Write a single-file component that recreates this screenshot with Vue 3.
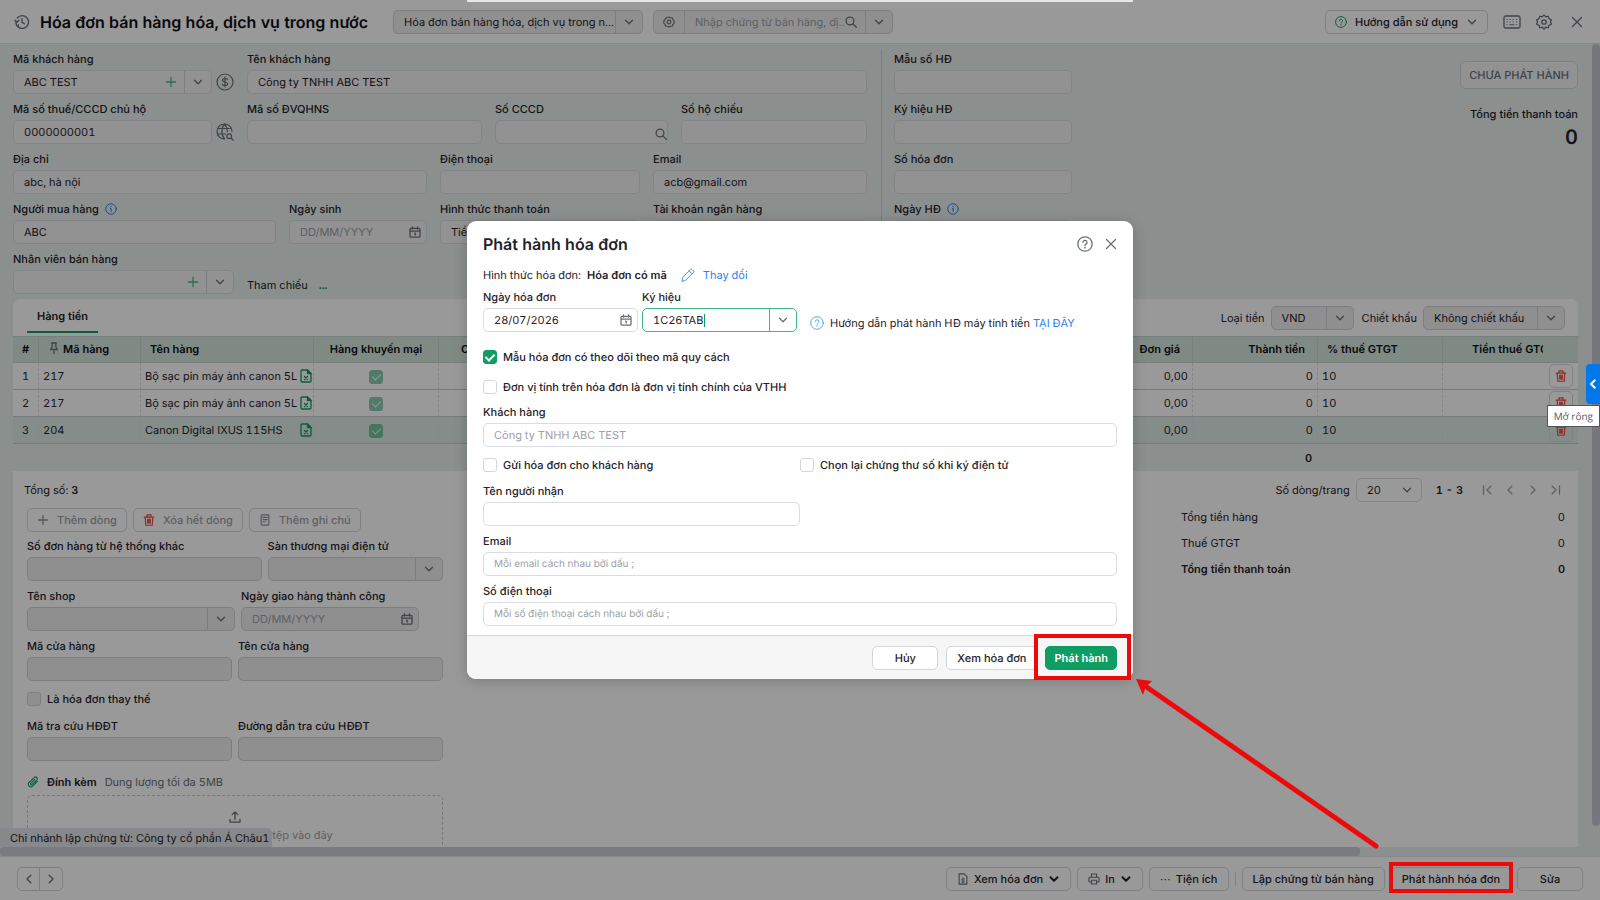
<script setup>
import { ref } from 'vue'

const rows = ref([
  { id: 1, code: '217', name: 'Bộ sạc pin máy ảnh canon 5L', price: '0,00', amount: 0, vat: 10 },
  { id: 2, code: '217', name: 'Bộ sạc pin máy ảnh canon 5L', price: '0,00', amount: 0, vat: 10 },
  { id: 3, code: '204', name: 'Canon Digital IXUS 115HS', price: '0,00', amount: 0, vat: 10 },
])

const selected = ref(3)

const customer = ref({
  code: 'ABC TEST',
  name: 'Công ty TNHH ABC TEST',
  tax: '0000000001',
  address: 'abc, hà nội',
  email: 'acb@gmail.com',
  buyer: 'ABC',
})

const issue = ref({
  date: '28/07/2026',
  symbol: '1C26TAB',
  spec: true,
  unit: false,
  send: false,
  cert: false,
  receiver: '',
  email: '',
  phone: '',
})
</script>

<template>
  <div class="page">
    <!-- icon sprite -->
    <svg class="sprite" aria-hidden="true">
      <symbol id="i-down" viewBox="0 0 12 12"><path d="M2.5 4.2 6 7.7l3.5-3.5" /></symbol>
      <symbol id="i-left" viewBox="0 0 12 12"><path d="M7.8 2.2 4 6l3.8 3.8" /></symbol>
      <symbol id="i-right" viewBox="0 0 12 12"><path d="M4.2 2.2 8 6l-3.8 3.8" /></symbol>
      <symbol id="i-first" viewBox="0 0 12 12"><path d="M9.8 2.2 6 6l3.8 3.8M2.5 1.8v8.4" /></symbol>
      <symbol id="i-last" viewBox="0 0 12 12"><path d="M2.2 2.2 6 6 2.2 9.8M9.5 1.8v8.4" /></symbol>
      <symbol id="i-plus" viewBox="0 0 12 12"><path d="M6 1.5v9M1.5 6h9" /></symbol>
      <symbol id="i-close" viewBox="0 0 12 12"><path d="M1.5 1.5l9 9M10.5 1.5l-9 9" /></symbol>
      <symbol id="i-history" viewBox="0 0 16 16">
        <path d="M1.8 8.4A6.4 6.4 0 1 0 3.2 4M8 4.3v3.9l2.4 1.6M1 6.2l1.9 2 2-1.9M3.4 12.6 4.6 11" />
      </symbol>
      <symbol id="i-gear" viewBox="0 0 16 16">
        <circle cx="8" cy="8" r="2.2" />
        <path d="M8 .9l1.7 1.9 2.5-.6.8 2.4 2.3 1.2-.7 2.2.7 2.2-2.3 1.2-.8 2.4-2.5-.6L8 15.1l-1.7-1.9-2.5.6-.8-2.4L.7 10.2l.7-2.2L.7 5.8 3 4.6l.8-2.4 2.5.6z" />
      </symbol>
      <symbol id="i-cog" viewBox="0 0 14 14">
        <circle cx="7" cy="7" r="2.2" />
        <path d="M7 1l1.5 1h2.200l.8 2L13 5.500V8.500L11.500 10l-.8 2H8.500L7 13l-1.500-1H3.300l-.8-2L1 8.500v-3L2.500 4l.8-2h2.200z" />
      </symbol>
      <symbol id="i-search" viewBox="0 0 12 12"><circle cx="5" cy="5" r="3.9" /><path d="M7.9 7.9l3.4 3.4" /></symbol>
      <symbol id="i-help" viewBox="0 0 16 16">
        <circle cx="8" cy="8" r="7.2" />
        <path d="M6 6.3A2 2 0 1 1 8.8 8.2C8.2 8.5 8 8.8 8 9.5M8 11.2v.8" />
      </symbol>
      <symbol id="i-info" viewBox="0 0 16 16"><circle cx="8" cy="8" r="7" /><path d="M7 7.3h1.2v4M8 4.3v1" /></symbol>
      <symbol id="i-keyboard" viewBox="0 0 18 14">
        <rect x="1" y="1" width="16" height="12" rx="1.5" />
        <g stroke-width="1"><path d="M4 4.500h.2M7 4.500h.2M10 4.500h.2M13.500 4.500h.2M4 7h.2M7 7h.2M10 7h.2M13.500 7h.2M4 9.700h.2M7 9.700h4M13.500 9.700h.2" /></g>
      </symbol>
      <symbol id="i-dollar" viewBox="0 0 18 18">
        <circle cx="9" cy="9" r="8" />
        <path d="M11.500 6.600C11 5.700 10.200 5.500 9 5.500c-1.500 0-2.500.6-2.500 1.700C6.500 9.700 11.600 8.300 11.600 10.800c0 1.100-1 1.800-2.600 1.800-1.300 0-2.300-.4-2.700-1.400M9 4v10" />
      </symbol>
      <symbol id="i-globe" viewBox="0 0 18 18">
        <path d="M16 8.500A7.500 7.500 0 1 0 8.500 16M8.500 1C5 5 5 12 8.500 16M8.500 1c2 2.300 2.900 4.800 2.900 7.500M2 5.500h13M1.500 11h8" />
        <circle cx="13.200" cy="13.200" r="2.400" /><path d="M15 15l2.300 2.300" />
      </symbol>
      <symbol id="i-calendar" viewBox="0 0 12 12">
        <path d="M2 2.300h8q1 0 1 1v6.900q0 1-1 1H2q-1 0-1-1V3.300q0-1 1-1zM1 5.200h10M3.500.8v2.400M8.500.8v2.400M5.700 7.200h.5v1.900" />
      </symbol>
      <symbol id="i-pin" viewBox="0 0 10 12"><path d="M2.500 1h5M3.200 1v4L1.500 7.500h7L6.800 5V1M5 7.500v4" /></symbol>
      <symbol id="i-sheet" viewBox="0 0 12 14">
        <path d="M1 2.200Q1 1 2.200 1H7.500L11 4.500V11.800Q11 13 9.800 13H2.200Q1 13 1 11.800zM4.500 7.500l3 3M7.500 7.500l-3 3" />
        <path d="M7.500 1v3.500H11z" fill="currentColor" />
      </symbol>
      <symbol id="i-trash" viewBox="0 0 12 13">
        <path d="M.8 3.300h10.400M3.800 3.300V1h4.400v2.300M1.900 3.300l.6 8.900h7l.6-8.900M4.600 5.600v4.300M6 5.600v4.300M7.400 5.600v4.300" />
      </symbol>
      <symbol id="i-note" viewBox="0 0 12 14">
        <rect x="1.500" y="1" width="9" height="12" rx="1" /><path d="M3.500 4h5M3.500 6.500h5M3.500 9h3" />
      </symbol>
      <symbol id="i-clip" viewBox="0 0 14 14">
        <path d="M12 6.300 6.700 11.700a2.900 2.900 0 0 1-4.200-4.200l5.800-5.700a2 2 0 0 1 3 2.900L5.800 10a1 1 0 0 1-1.500-1.400L9 4" />
      </symbol>
      <symbol id="i-upload" viewBox="0 0 12 12"><path d="M6 8.500V1M3.200 3.600 6 .9l2.800 2.700M1 8.500v2.600h10V8.500" /></symbol>
      <symbol id="i-doc" viewBox="0 0 12 14">
        <path d="M1.500 1h6l3 3v9h-9z" />
        <g stroke-width="1"><path d="M7.600 7C7 6.400 4.500 6.300 4.500 7.600S7.600 8.600 7.600 9.900 5 11.200 4.400 10.400M6 5.500v6.300" /></g>
      </symbol>
      <symbol id="i-print" viewBox="0 0 14 14">
        <path d="M4 5V1.200h6V5M4 10.500H2.500Q1 10.500 1 9V6.500Q1 5 2.500 5h9Q13 5 13 6.500V9q0 1.500-1.500 1.500H10M4 8.500h6v4.300H4z" />
      </symbol>
      <symbol id="i-pen" viewBox="0 0 14 14"><path d="M1 13l.9-3.800L9.500 1.500q.8-.8 1.600 0l1.300 1.300q.8.8 0 1.600L4.800 12.100zM8.200 2.900l2.900 2.900" /></symbol>
    </svg>

    <header class="topbar">
      <svg class="ic s16"><use href="#i-history" /></svg>
      <h1>Hóa đơn bán hàng hóa, dịch vụ trong nước</h1>
      <div class="box grey type">
        <select aria-label="Loại hóa đơn"><option>Hóa đơn bán hàng hóa, dịch vụ trong n...</option></select>
        <span class="arrow"><svg class="ic s12"><use href="#i-down" /></svg></span>
      </div>
      <div class="box grey find">
        <button class="arrow first" aria-label="Tùy chọn"><svg class="ic s12"><use href="#i-cog" /></svg></button>
        <input type="text" aria-label="Tìm chứng từ" placeholder="Nhập chứng từ bán hàng, dị...">
        <svg class="ic s12 in"><use href="#i-search" /></svg>
        <button class="arrow" aria-label="Mở"><svg class="ic s12"><use href="#i-down" /></svg></button>
      </div>
      <span class="grow"></span>
      <button class="btn guide">
        <svg class="ic s12 green"><use href="#i-help" /></svg>Hướng dẫn sử dụng<svg class="ic s12"><use href="#i-down" /></svg>
      </button>
      <button class="plain" aria-label="Bàn phím"><svg class="ic s18"><use href="#i-keyboard" /></svg></button>
      <button class="plain" aria-label="Thiết lập"><svg class="ic s16"><use href="#i-gear" /></svg></button>
      <button class="plain" aria-label="Đóng"><svg class="ic s12"><use href="#i-close" /></svg></button>
    </header>

    <main class="main">
      <section class="info">
        <div class="buyer">
          <div class="line l1">
            <div class="with-icon">
              <div class="field">
                <label for="code">Mã khách hàng</label>
                <div class="box">
                  <input id="code" v-model="customer.code" type="text">
                  <button class="plain in" aria-label="Thêm khách hàng"><svg class="ic s12 mint"><use href="#i-plus" /></svg></button>
                  <button class="arrow" aria-label="Mở"><svg class="ic s12"><use href="#i-down" /></svg></button>
                </div>
              </div>
              <svg class="ic s18"><use href="#i-dollar" /></svg>
            </div>
            <div class="field">
              <label for="name">Tên khách hàng</label>
              <div class="box"><input id="name" v-model="customer.name" type="text"></div>
            </div>
          </div>
          <div class="line l2">
            <div class="with-icon">
              <div class="field">
                <label for="tax">Mã số thuế/CCCD chủ hộ</label>
                <div class="box"><input id="tax" v-model="customer.tax" type="text"></div>
              </div>
              <svg class="ic s18"><use href="#i-globe" /></svg>
            </div>
            <div class="field">
              <label for="dvqhns">Mã số ĐVQHNS</label>
              <div class="box"><input id="dvqhns" type="text"></div>
            </div>
            <div class="field">
              <label for="cccd">Số CCCD</label>
              <div class="box"><input id="cccd" type="text"><svg class="ic s12 edge"><use href="#i-search" /></svg></div>
            </div>
            <div class="field">
              <label for="passport">Số hộ chiếu</label>
              <div class="box"><input id="passport" type="text"></div>
            </div>
          </div>
          <div class="line l3">
            <div class="field">
              <label for="address">Địa chỉ</label>
              <div class="box"><input id="address" v-model="customer.address" type="text"></div>
            </div>
            <div class="field">
              <label for="tel">Điện thoại</label>
              <div class="box"><input id="tel" type="text"></div>
            </div>
            <div class="field">
              <label for="mail">Email</label>
              <div class="box"><input id="mail" v-model="customer.email" type="text"></div>
            </div>
          </div>
          <div class="line l4">
            <div class="field">
              <label for="buyer">Người mua hàng <svg class="ic s12 blue"><use href="#i-info" /></svg></label>
              <div class="box"><input id="buyer" v-model="customer.buyer" type="text"></div>
            </div>
            <div class="field">
              <label for="birth">Ngày sinh</label>
              <div class="box"><input id="birth" type="text" placeholder="DD/MM/YYYY"><svg class="ic s12 in"><use href="#i-calendar" /></svg></div>
            </div>
            <div class="field">
              <label for="pay">Hình thức thanh toán</label>
              <div class="box">
                <select id="pay"><option>Tiền mặt</option></select>
                <span class="arrow"><svg class="ic s12"><use href="#i-down" /></svg></span>
              </div>
            </div>
            <div class="field">
              <label for="bank">Tài khoản ngân hàng</label>
              <div class="box">
                <select id="bank"><option></option></select>
                <span class="arrow"><svg class="ic s12"><use href="#i-down" /></svg></span>
              </div>
            </div>
          </div>
          <div class="line l5">
            <div class="field">
              <label for="staff">Nhân viên bán hàng</label>
              <div class="box">
                <input id="staff" type="text">
                <button class="plain in" aria-label="Thêm nhân viên"><svg class="ic s12 mint"><use href="#i-plus" /></svg></button>
                <button class="arrow" aria-label="Mở"><svg class="ic s12"><use href="#i-down" /></svg></button>
              </div>
            </div>
            <p class="ref">Tham chiếu <a href="#">...</a></p>
          </div>
        </div>

        <div class="seller">
          <div class="field">
            <label for="form-no">Mẫu số HĐ</label>
            <div class="box"><input id="form-no" type="text"></div>
          </div>
          <div class="field">
            <label for="serial">Ký hiệu HĐ</label>
            <div class="box"><input id="serial" type="text"></div>
          </div>
          <div class="field">
            <label for="inv-no">Số hóa đơn</label>
            <div class="box"><input id="inv-no" type="text"></div>
          </div>
          <div class="field">
            <label for="inv-date">Ngày HĐ <svg class="ic s12 blue"><use href="#i-info" /></svg></label>
            <div class="box"><input id="inv-date" type="text"></div>
          </div>
        </div>

        <div class="status">
          <button class="btn state">CHƯA PHÁT HÀNH</button>
          <p>Tổng tiền thanh toán</p>
          <strong>0</strong>
        </div>
      </section>

      <section class="card">
        <div class="tools">
          <a class="tab" href="#">Hàng tiền</a>
          <span class="grow"></span>
          <label for="currency">Loại tiền</label>
          <div class="box grey currency">
            <select id="currency"><option>VND</option></select>
            <span class="arrow"><svg class="ic s12"><use href="#i-down" /></svg></span>
          </div>
          <label for="discount">Chiết khấu</label>
          <div class="box grey discount">
            <select id="discount"><option>Không chiết khấu</option></select>
            <span class="arrow"><svg class="ic s12"><use href="#i-down" /></svg></span>
          </div>
        </div>

        <table>
          <colgroup>
            <col class="c-no"><col class="c-code"><col class="c-name"><col class="c-mid"><col>
            <col class="c-mid"><col class="c-mid"><col class="c-mid"><col class="c-tax"><col class="c-act">
          </colgroup>
          <thead>
            <tr>
              <th class="center">#</th>
              <th><svg class="ic s12 pin"><use href="#i-pin" /></svg>Mã hàng</th>
              <th>Tên hàng</th>
              <th class="center">Hàng khuyến mại</th>
              <th class="next">CK</th>
              <th class="num">Đơn giá</th>
              <th class="num">Thành tiền</th>
              <th>% thuế GTGT</th>
              <th class="tax">Tiền thuế GTGT</th>
              <th></th>
            </tr>
          </thead>
          <tbody>
            <tr v-for="row in rows" :key="row.id" :class="{ active: row.id === selected }" @click="selected = row.id">
              <td class="center">{{ row.id }}</td>
              <td>{{ row.code }}</td>
              <td class="name">
                <div class="item"><span>{{ row.name }}</span><svg class="ic sheet green"><use href="#i-sheet" /></svg></div>
              </td>
              <td class="center"><input type="checkbox" class="check" checked disabled aria-label="Hàng khuyến mại"></td>
              <td></td>
              <td class="num">{{ row.price }}</td>
              <td class="num">{{ row.amount }}</td>
              <td>{{ row.vat }}</td>
              <td class="last"></td>
              <td class="act"><button class="del" aria-label="Xóa dòng"><svg class="ic s12 red"><use href="#i-trash" /></svg></button></td>
            </tr>
          </tbody>
          <tfoot>
            <tr>
              <td colspan="6"></td>
              <td class="num">0</td>
              <td colspan="3"></td>
            </tr>
          </tfoot>
        </table>

        <div class="detail">
          <div class="pager">
            <span>Tổng số: <b>3</b></span>
            <span class="grow"></span>
            <label for="size">Số dòng/trang</label>
            <div class="box size">
              <select id="size"><option>20</option></select>
              <svg class="ic s12 in"><use href="#i-down" /></svg>
            </div>
            <b>1 - 3</b>
            <div class="steps">
              <button class="plain" aria-label="Trang đầu"><svg class="ic s12"><use href="#i-first" /></svg></button>
              <button class="plain" aria-label="Trang trước"><svg class="ic s12"><use href="#i-left" /></svg></button>
              <button class="plain" aria-label="Trang sau"><svg class="ic s12"><use href="#i-right" /></svg></button>
              <button class="plain" aria-label="Trang cuối"><svg class="ic s12"><use href="#i-last" /></svg></button>
            </div>
          </div>

          <div class="split">
            <div class="extra">
              <div class="actions">
                <button class="btn mute"><svg class="ic s12"><use href="#i-plus" /></svg>Thêm dòng</button>
                <button class="btn mute"><svg class="ic s12 red"><use href="#i-trash" /></svg>Xóa hết dòng</button>
                <button class="btn mute"><svg class="ic s12"><use href="#i-note" /></svg>Thêm ghi chú</button>
              </div>
              <div class="pair p1">
                <div class="field">
                  <label for="order">Số đơn hàng từ hệ thống khác</label>
                  <div class="box grey"><input id="order" type="text"></div>
                </div>
                <div class="field">
                  <label for="market">Sàn thương mại điện tử</label>
                  <div class="box grey">
                    <select id="market"><option></option></select>
                    <span class="arrow"><svg class="ic s12"><use href="#i-down" /></svg></span>
                  </div>
                </div>
              </div>
              <div class="pair p2">
                <div class="field">
                  <label for="shop">Tên shop</label>
                  <div class="box grey">
                    <select id="shop"><option></option></select>
                    <span class="arrow"><svg class="ic s12"><use href="#i-down" /></svg></span>
                  </div>
                </div>
                <div class="field">
                  <label for="ship">Ngày giao hàng thành công</label>
                  <div class="box grey"><input id="ship" type="text" placeholder="DD/MM/YYYY"><svg class="ic s12 in"><use href="#i-calendar" /></svg></div>
                </div>
              </div>
              <div class="pair">
                <div class="field">
                  <label for="store-code">Mã cửa hàng</label>
                  <div class="box grey"><input id="store-code" type="text"></div>
                </div>
                <div class="field">
                  <label for="store">Tên cửa hàng</label>
                  <div class="box grey"><input id="store" type="text"></div>
                </div>
              </div>
              <label class="tick replace"><input type="checkbox" class="check grey">Là hóa đơn thay thế</label>
              <div class="pair lookup">
                <div class="field">
                  <label for="lookup">Mã tra cứu HĐĐT</label>
                  <div class="box grey"><input id="lookup" type="text"></div>
                </div>
                <div class="field">
                  <label for="url">Đường dẫn tra cứu HĐĐT</label>
                  <div class="box grey"><input id="url" type="text"></div>
                </div>
              </div>
              <p class="attach"><svg class="ic s12 green"><use href="#i-clip" /></svg><b>Đính kèm</b><span>Dung lượng tối đa 5MB</span></p>
              <div class="drop">
                <svg class="ic s12"><use href="#i-upload" /></svg>
                <span>Chọn tệp hoặc kéo và thả tệp vào đây</span>
              </div>
            </div>

            <dl class="totals">
              <div><dt>Tổng tiền hàng</dt><dd>0</dd></div>
              <div><dt>Thuế GTGT</dt><dd>0</dd></div>
              <div class="sum"><dt>Tổng tiền thanh toán</dt><dd>0</dd></div>
            </dl>
          </div>
        </div>
      </section>
      <div class="branch">Chi nhánh lập chứng từ: Công ty cổ phần Á Châu1</div>
      <div class="vbar"></div>
    </main>

    <div class="hbar"><div></div></div>

    <footer class="bottom">
      <div class="box nav">
        <button class="arrow first" aria-label="Trước"><svg class="ic s12"><use href="#i-left" /></svg></button>
        <button class="arrow bare" aria-label="Sau"><svg class="ic s12"><use href="#i-right" /></svg></button>
      </div>
      <span class="grow"></span>
      <button class="btn"><svg class="ic s12"><use href="#i-doc" /></svg>Xem hóa đơn<svg class="ic s12 dark"><use href="#i-down" /></svg></button>
      <button class="btn"><svg class="ic s12"><use href="#i-print" /></svg>In<svg class="ic s12 dark"><use href="#i-down" /></svg></button>
      <button class="btn"><span>⋯</span>Tiện ích</button>
      <i class="bar"></i>
      <button class="btn">Lập chứng từ bán hàng</button>
      <button class="btn">Phát hành hóa đơn</button>
      <button class="btn edit">Sửa</button>
    </footer>

    <div class="overlay">
      <form class="modal" @submit.prevent>
        <div class="content">
          <div class="head">
            <h2>Phát hành hóa đơn</h2>
            <button type="button" class="plain" aria-label="Trợ giúp"><svg class="ic s16"><use href="#i-help" /></svg></button>
            <button type="button" class="plain" aria-label="Đóng"><svg class="ic s12"><use href="#i-close" /></svg></button>
          </div>
          <p class="kind">
            Hình thức hóa đơn: <b>Hóa đơn có mã</b>
            <a href="#"><svg class="ic s14 sky"><use href="#i-pen" /></svg>Thay đổi</a>
          </p>
          <div class="when">
            <div class="field">
              <label for="i-date">Ngày hóa đơn</label>
              <div class="box"><input id="i-date" v-model="issue.date" type="text"><svg class="ic s12 in"><use href="#i-calendar" /></svg></div>
            </div>
            <div class="field">
              <label for="i-symbol">Ký hiệu</label>
              <div class="box focus">
                <input id="i-symbol" v-model="issue.symbol" type="text"><i class="caret"></i>
                <button type="button" class="arrow" aria-label="Mở"><svg class="ic s12"><use href="#i-down" /></svg></button>
              </div>
            </div>
            <p class="hint"><svg class="ic s14 sky"><use href="#i-help" /></svg><span>Hướng dẫn phát hành HĐ máy tính tiền <a href="#">TẠI ĐÂY</a></span></p>
          </div>
          <label class="tick t1"><input v-model="issue.spec" type="checkbox" class="check">Mẫu hóa đơn có theo dõi theo mã quy cách</label>
          <label class="tick t2"><input v-model="issue.unit" type="checkbox" class="check">Đơn vị tính trên hóa đơn là đơn vị tính chính của VTHH</label>
          <div class="field">
            <label for="i-customer">Khách hàng</label>
            <div class="box"><input id="i-customer" type="text" placeholder="Công ty TNHH ABC TEST"></div>
          </div>
          <div class="ticks">
            <label class="tick"><input v-model="issue.send" type="checkbox" class="check">Gửi hóa đơn cho khách hàng</label>
            <label class="tick"><input v-model="issue.cert" type="checkbox" class="check">Chọn lại chứng thư số khi ký điện tử</label>
          </div>
          <div class="field half">
            <label for="i-receiver">Tên người nhận</label>
            <div class="box"><input id="i-receiver" v-model="issue.receiver" type="text"></div>
          </div>
          <div class="field small">
            <label for="i-email">Email</label>
            <div class="box"><input id="i-email" v-model="issue.email" type="text" placeholder="Mỗi email cách nhau bởi dấu ;"></div>
          </div>
          <div class="field small">
            <label for="i-phone">Số điện thoại</label>
            <div class="box"><input id="i-phone" v-model="issue.phone" type="text" placeholder="Mỗi số điện thoại cách nhau bởi dấu ;"></div>
          </div>
        </div>
        <div class="foot">
          <button type="button" class="btn cancel">Hủy</button>
          <button type="button" class="btn">Xem hóa đơn</button>
          <div class="marked">
            <button class="btn primary">Phát hành</button>
            <i class="mark"></i>
          </div>
        </div>
      </form>
    </div>

    <div class="strip"></div>
    <i class="mark target"></i>
    <svg class="pointer" viewBox="0 0 250 176" aria-hidden="true">
      <path d="M244 170 16 12" fill="none" stroke="#ee0a0a" stroke-width="5" stroke-linecap="round" />
      <path d="M4 3 20 5 16 9 13 13 11 19z" fill="#ee0a0a" />
    </svg>
    <button class="expand" aria-label="Mở rộng"><svg class="ic s12"><use href="#i-left" /></svg></button>
    <div class="tip">Mở rộng</div>
  </div>
</template>

<style>
body{
  margin: 0;
  overflow: hidden;
}
</style>

<style scoped>
.page{
  position: relative;
  display: flex;
  flex-direction: column;
  height: 100vh;
  overflow: hidden;
  background: #e8f0ed;
  color: #1f2229;
  font-family: Inter, "Liberation Sans", sans-serif;
  font-size: 11px;
  line-height: 18px;
  font-variant-numeric: tabular-nums;
  text-rendering: geometricPrecision;
}

.page *{
  box-sizing: border-box;
}

h1, h2, p, dl, dd{
  margin: 0;
}

a{
  color: #2f80f5;
  text-decoration: none;
}

input, select, button{
  font: inherit;
  font-variant-numeric: inherit;
  text-rendering: inherit;
  color: inherit;
}

b{
  font-weight: 600;
}

.sprite{
  position: absolute;
  width: 0;
  height: 0;
}

.grow{
  flex: 1;
}

/* icons */
.ic{
  flex: none;
  fill: none;
  stroke: currentColor;
  stroke-width: 1.3;
  stroke-linecap: round;
  stroke-linejoin: round;
  color: #6b7078;
}
.s12{ width: 12px; height: 12px; }
.s14{ width: 14px; height: 14px; }
.s16{ width: 16px; height: 16px; }
.s18{ width: 18px; height: 18px; }
.green{ color: #0f9d63; }
.mint{ color: #3fb98a; }
.red{ color: #ee4a3f; }
.blue{ color: #2f80f5; }
.sky{ color: #3ba0e0; stroke-width: 1; }
.dark{ color: #1f2229; stroke-width: 2; }

/* controls */
.box{
  position: relative;
  display: flex;
  align-items: center;
  height: 24px;
  min-width: 0;
  border: 1px solid #d9dce1;
  border-radius: 5px;
  background: #f3f3f3;
  overflow: hidden;
}
.box.grey{
  background: #efefef;
  border-color: #cfd2d8;
}

.box input, .box select{
  flex: 1;
  width: 100%;
  min-width: 0;
  height: 100%;
  padding: 0 0 0 10px;
  border: 0;
  outline: 0;
  appearance: none;
  background: none;
}

::placeholder{
  color: #9da1a8;
  opacity: 1;
}

.arrow{
  display: flex;
  align-items: center;
  justify-content: center;
  flex: none;
  width: 27px;
  height: 100%;
  padding: 0;
  border: 0;
  border-left: 1px solid #cfd2d8;
  background: none;
}
.arrow.first{
  border-left: 0;
  border-right: 1px solid #cfd2d8;
}
.arrow.bare{
  border-left: 0;
}

.in{
  margin-right: 5px;
}
.plain.in{
  margin-right: 7px;
}
.edge{
  margin-top: 3px;
}

.plain{
  display: flex;
  padding: 0;
  border: 0;
  background: none;
}

.btn{
  display: flex;
  align-items: center;
  justify-content: center;
  gap: 8px;
  height: 24px;
  padding: 0 10px;
  border: 1px solid #d3d6dc;
  border-radius: 5px;
  background: #fff;
  font-weight: 500;
  white-space: nowrap;
}

.field{
  display: flex;
  flex-direction: column;
  gap: 2px;
  flex: 1;
  min-width: 0;
}
label{
  font-weight: 500;
  white-space: nowrap;
}
.field > label{
  display: flex;
  align-items: center;
  gap: 6px;
}

.check{
  display: grid;
  place-content: center;
  flex: none;
  width: 14px;
  height: 14px;
  margin: 0;
  appearance: none;
  border: 1px solid #d3d6dc;
  border-radius: 3px;
  background: #fff;
}
.check.grey{
  background: #efefef;
}
.check:checked{
  border-color: #0f9d63;
  background: #0f9d63;
}
.check:checked::after{
  content: "";
  width: 4px;
  height: 7px;
  margin-top: -2px;
  border: solid #fff;
  border-width: 0 2px 2px 0;
  transform: rotate(45deg);
}
.check:disabled{
  display: inline-grid;
  vertical-align: middle;
  opacity: .5;
}
.check:disabled::after{
  border-width: 0 1px 1px 0;
}
.tick{
  display: flex;
  align-items: center;
  gap: 6px;
}

/* top bar */
.topbar{
  display: flex;
  align-items: center;
  flex: none;
  height: 44px;
  padding: 0 17px 0 14px;
  border-bottom: 1px solid #dcdfe4;
  background: #fff;
}
h1{
  width: 334px;
  margin: 0 19px 0 10px;
  font-size: 16px;
  font-weight: 600;
  line-height: 24px;
  white-space: nowrap;
  color: #0b0e14;
}
.type{
  width: 250px;
  margin-right: 10px;
}
.find{
  width: 240px;
}
.find .arrow.first{
  width: 31px;
}
.find .in{
  margin-right: 8px;
}
.guide{
  width: 163px;
}
.topbar .plain{
  margin-left: 15px;
}
.topbar .plain:last-child{
  margin-left: 19px;
}

/* customer block */
.main{
  position: relative;
  flex: 1;
  min-height: 0;
  padding: 6px 22px 0 13px;
  overflow: hidden;
}
.info{
  display: flex;
  margin-bottom: 5px;
}
.buyer{
  display: flex;
  flex-direction: column;
  gap: 6px;
  flex: 1;
  min-width: 0;
}
.line{
  display: grid;
  gap: 13px;
}
.l1, .l5{ grid-template-columns: 221fr 620fr; }
.l2{ grid-template-columns: 221fr 235fr 173fr 186fr; }
.l3{ grid-template-columns: 414fr 200fr 214fr; }
.l4{ grid-template-columns: 263fr 138fr 200fr 214fr; }
.with-icon{
  display: flex;
  align-items: flex-end;
  gap: 4px;
}
.with-icon > .ic{
  margin-bottom: 3px;
  stroke-width: 1.2;
}
.ref{
  align-self: end;
}
.ref a{
  margin-left: 8px;
  color: #0f9d63;
  font-weight: 700;
}

.seller{
  display: flex;
  flex-direction: column;
  gap: 6px;
  width: 191px;
  margin-left: 14px;
  padding-left: 12px;
  border-left: 1px solid #cfd5d3;
}
.seller .field{
  flex: none;
}
.status{
  display: flex;
  flex-direction: column;
  align-items: flex-end;
  width: 506px;
  padding-top: 11px;
}
.state{
  height: 28px;
  margin-bottom: 16px;
  padding: 0 8px;
  border-radius: 6px;
  background: #f3f3f3;
  color: #6b7078;
}
.status p{
  font-weight: 500;
}
.status strong{
  margin-top: 2px;
  font-size: 20px;
  font-weight: 600;
  line-height: 24px;
}

/* items card */
.card{
  border-radius: 8px 8px 0 0;
  background: #fff;
  overflow: hidden;
}
.tools{
  display: flex;
  align-items: center;
  height: 37px;
  padding: 0 13px 0 14px;
}
.tools label{
  font-weight: 400;
}
.tab{
  align-self: flex-start;
  height: 34px;
  padding: 8px 10px 0;
  border-bottom: 2px solid #0f9d63;
  color: inherit;
  font-weight: 600;
}
.currency{
  width: 83px;
  margin: 0 8px 0 6px;
}
.discount{
  width: 142px;
  margin-left: 6px;
}

table{
  width: 100%;
  border-collapse: separate;
  border-spacing: 0;
  table-layout: fixed;
}
.c-no{ width: 26px; }
.c-code{ width: 102px; }
.c-name{ width: 173px; }
.c-mid{ width: 125px; }
.c-tax{ width: 100px; }
.c-act{ width: 35px; }
th, td{
  height: 27px;
  padding: 0 4px;
  border-right: 1px dashed #dcdfe4;
  border-bottom: 1px solid #c6cbcf;
  text-align: left;
  white-space: nowrap;
  overflow: hidden;
}
th{
  padding: 0 9px 2px;
  border-top: 1px solid #c9d6d0;
  border-right: 1px solid #c6d6cf;
  border-bottom: 1px solid #c9d6d0;
  background: #d5e6de;
  color: #0b0e14;
  font-weight: 600;
}
.center{
  text-align: center;
}
td.center{
  padding: 0;
}
th.center{
  padding: 0 0 2px;
  text-align: center;
}
td.center{
  text-align: center;
}
td.name{
  padding-right: 1px;
}
th.num{
  padding-right: 12px;
}
.num{
  text-align: right;
}
th.next{
  padding-left: 22px;
}
th.tax{
  padding: 0 0 2px 29px;
  text-overflow: clip;
}
th.tax, th:last-child, td.last, td.act{
  border-right: 0;
}
.pin{
  margin: 0 3px 0 0;
  vertical-align: -1px;
}
.active td{
  background: #dcebe4;
}
.item{
  display: flex;
  align-items: center;
  justify-content: space-between;
}
.sheet{
  width: 12px;
  height: 14px;
}
td.act{
  padding: 0 6px;
  background: #fff;
}
.active td.act{
  background: #dcebe4;
}
.del{
  display: flex;
  align-items: center;
  justify-content: center;
  width: 24px;
  height: 24px;
  padding: 0;
  border: 1px solid #d3d6dc;
  border-radius: 5px;
  background: none;
}
tfoot td{
  padding-right: 6px;
  border: 0;
  background: #e8f0ed;
  font-weight: 600;
}

/* below the table */
.detail{
  padding: 7px 13px 0 14px;
}
.pager{
  display: flex;
  align-items: center;
  margin-bottom: 6px;
}
.pager > span:first-child{
  margin-left: -3px;
}
.pager label{
  font-weight: 400;
}
.size{
  width: 66px;
  margin: 0 14px 0 6px;
  background: #fff;
}
.size .in{
  margin-right: 8px;
}
.steps{
  display: flex;
  gap: 11px;
  margin: 0 3px 0 18px;
}
.steps .ic{
  color: #9da1a8;
}

.split{
  display: flex;
  justify-content: space-between;
}
.extra{
  width: 416px;
}
.actions{
  display: flex;
  gap: 6px;
  margin-bottom: 5px;
}
.mute{
  padding: 0 9px;
  color: #9da1a8;
}
.mute .ic:not(.red){
  color: #8b9097;
}
.pair{
  display: grid;
  grid-template-columns: 1fr 1fr;
  gap: 6px;
  margin-bottom: 6px;
}
.p1{ grid-template-columns: 234fr 175fr; }
.p2{ grid-template-columns: 208fr 178fr; padding-right: 24px; }
.replace{
  margin: 9px 0;
}
.lookup{
  margin-bottom: 12px;
}
.attach{
  display: flex;
  align-items: center;
  margin-bottom: 4px;
}
.attach b{
  margin: 0 8px;
}
.attach span{
  color: #6b7078;
}
.drop{
  display: flex;
  flex-direction: column;
  align-items: center;
  gap: 3px;
  height: 72px;
  padding-top: 15px;
  border: 1px dashed #c3c6cc;
  border-radius: 5px;
  color: #9da1a8;
}
.totals{
  display: flex;
  flex-direction: column;
  gap: 8px;
  width: 384px;
}
.totals div{
  display: flex;
  justify-content: space-between;
}
.sum{
  font-weight: 600;
}

.branch{
  position: absolute;
  left: 0;
  bottom: 0;
  padding: 1px 3px 0 10px;
  background: #dfe3e8;
  border-radius: 0 5px 0 0;
}
.vbar{
  position: absolute;
  top: 0;
  right: 0;
  bottom: 21px;
  width: 8px;
  border-radius: 4px;
  background: #c5c7cf;
}
.hbar{
  flex: none;
  height: 9px;
}
.hbar div{
  width: 85%;
  height: 100%;
  border-radius: 4px;
  background: #cccdd4;
}

.bottom{
  display: flex;
  align-items: center;
  gap: 6px;
  flex: none;
  height: 44px;
  padding: 0 17px;
  border-top: 1px solid #dcdfe4;
  background: #fff;
}
.nav{
  background: #fff;
  border-color: #cfd2d8;
}
.nav .arrow{
  width: 22px;
}
.bar{
  width: 1px;
  height: 14px;
  background: #d3d6dc;
}
.bottom .btn{
  gap: 5px;
}
.bottom .edit{
  width: 66px;
}

/* dialog */
.overlay{
  position: absolute;
  inset: 0;
  display: flex;
  align-items: center;
  justify-content: center;
  background: rgba(0, 0, 0, .4);
}
.modal{
  width: 666px;
  border-radius: 9px;
  background: #fff;
  box-shadow: 0 2px 14px rgba(0, 0, 0, .2);
}
.content{
  padding: 11px 16px 9px;
}
.head{
  display: flex;
  align-items: center;
  gap: 12px;
  margin-bottom: 10px;
}
h2{
  flex: 1;
  font-size: 16px;
  font-weight: 600;
  line-height: 24px;
}
.kind{
  display: flex;
  align-items: center;
  margin-bottom: 4px;
}
.kind b{
  margin: 0 14px 0 6px;
}
.kind a{
  display: flex;
  align-items: center;
  gap: 8px;
}
.modal .box{
  background: #fff;
}
.modal .box.focus{
  border-color: #3fb98a;
}
.modal .focus .arrow{
  border-color: #3fb98a;
}
.caret{
  position: absolute;
  left: 61px;
  top: 5px;
  width: 1px;
  height: 13px;
  background: #0f9d63;
}
.when{
  display: flex;
  align-items: flex-end;
  gap: 4px;
}
.when .field{
  flex: 0 0 155px;
}
.hint{
  display: flex;
  align-items: center;
  gap: 6px;
  margin-left: 9px;
}
.t1{
  margin: 16px 0 12px;
}
.t2{
  margin-bottom: 7px;
}
.ticks{
  display: grid;
  grid-template-columns: 1fr 1fr;
  margin: 9px 0 8px;
}
.half{
  width: 50%;
}
.small{
  margin-top: 6px;
}
.small input{
  font-size: 10px;
}
.foot{
  display: flex;
  align-items: center;
  justify-content: flex-end;
  gap: 8px;
  height: 44px;
  padding: 0 16px;
  border-top: 1px solid #d8d8d8;
  border-radius: 0 0 9px 9px;
  background: #f6f6f6;
}
.cancel{
  width: 66px;
}
.marked{
  position: relative;
}
.primary{
  padding: 0 8px;
  border-color: #0f9d63;
  background: #0f9d63;
  color: #fff;
  font-weight: 600;
}

/* callouts over the page */
.mark{
  position: absolute;
  inset: -12px -14px -10px -11px;
  border: 4px solid #ee0a0a;
  pointer-events: none;
}
.mark.target{
  inset: auto 87px 7px auto;
  width: 124px;
  height: 31px;
}
.strip{
  position: absolute;
  top: 0;
  left: calc(50% - 333px);
  width: 666px;
  height: 2px;
  background: #e6e6e6;
}
.pointer{
  position: absolute;
  right: 218px;
  bottom: 48px;
  width: 250px;
  height: 176px;
  pointer-events: none;
}
.expand{
  position: absolute;
  top: 364px;
  right: 0;
  display: flex;
  align-items: center;
  justify-content: center;
  width: 14px;
  height: 40px;
  padding: 0;
  border: 0;
  border-radius: 4px 0 0 4px;
  background: #0078ea;
}
.expand .ic{
  color: #fff;
  stroke-width: 2;
}
.tip{
  position: absolute;
  top: 405px;
  right: 0;
  padding: 1px 6px;
  border: 1px solid #555;
  background: #fff;
  color: #575757;
  font-family: "Open Sans", sans-serif;
  font-size: 10px;
}
</style>
